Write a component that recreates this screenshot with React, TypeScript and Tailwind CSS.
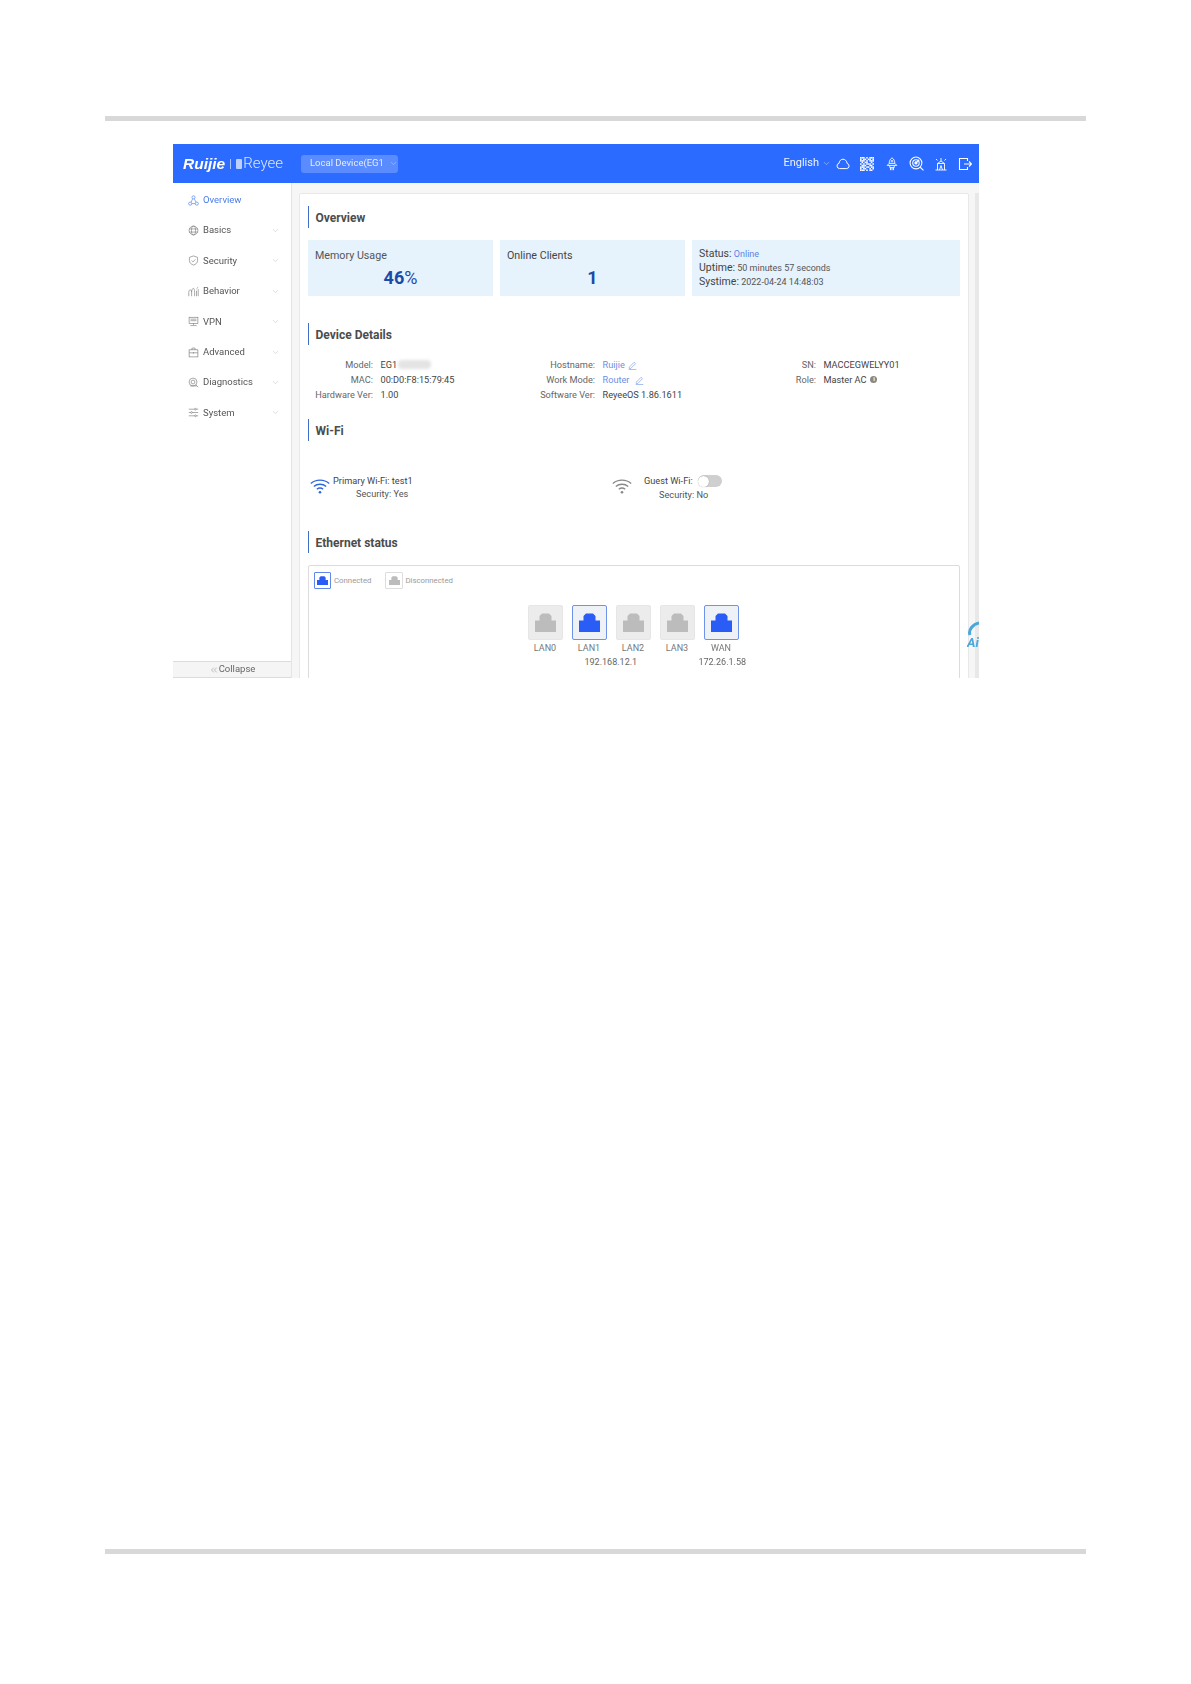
import { ChevronDown, ChevronsLeft } from 'lucide-react';
import type { ReactNode } from 'react';

const font = { fontFamily: 'Roboto, "Liberation Sans", sans-serif' };

function Ico({ size = 11, className = '', sw = 0.8, children }: { size?: number; className?: string; sw?: number; children: ReactNode }) {
  return (
    <svg width={size} height={size} viewBox="0 0 14 14" fill="none" stroke="currentColor" strokeWidth={sw} className={className}>
      {children}
    </svg>
  );
}

const navIcons: Record<string, ReactNode> = {
  Overview: (
    <>
      <circle cx="7" cy="3" r="2" />
      <circle cx="2.8" cy="11" r="2" />
      <circle cx="11.2" cy="11" r="2" />
      <path d="M6 4.8 3.8 9.2M8 4.8l2.2 4.4M4.8 11h4.4" />
    </>
  ),
  Basics: (
    <>
      <circle cx="7" cy="7" r="5.6" />
      <ellipse cx="7" cy="7" rx="2.6" ry="5.6" />
      <path d="M1.4 5h11.2M1.4 9h11.2" />
    </>
  ),
  Security: (
    <>
      <path d="M7 1.2 12.2 3v4c0 3-2.4 5-5.2 5.8C4.2 12 1.8 10 1.8 7V3Z" />
      <path d="m4.6 7 1.8 1.8 3-3.2" />
    </>
  ),
  Behavior: (
    <>
      <path d="M1 13V8c0-2 1-3 2-3s1.600 1 1.600 3v5M4.600 8c0-3 1.200-5 2.200-5s1.600 2 1.600 5v5M10.800 13V6M13 13V4M10.800 3.500 13 1.500" />
    </>
  ),
  VPN: (
    <>
      <rect x="1.4" y="1.6" width="11.2" height="7.8" />
      <path d="M3.2 4h7.6M3.2 6h7.6M7 9.4v2M3 12.2h8" />
    </>
  ),
  Advanced: (
    <>
      <rect x="1.4" y="3.6" width="11.2" height="9" />
      <path d="M5 3.6V1.4h4v2.2M1.4 7.4h11.2M7 6.4v2" />
    </>
  ),
  Diagnostics: (
    <>
      <circle cx="6.4" cy="6.4" r="5" />
      <circle cx="6.4" cy="6.4" r="2.4" />
      <path d="m10 10 3 3M3 11.4h8" />
    </>
  ),
  System: (
    <>
      <path d="M1 2.800h7.400M10.600 2.800H13M1 7h2.400M5.600 7H13M1 11.200h7.400M10.600 11.200H13" />
      <circle cx="9.500" cy="2.800" r="1.100" />
      <circle cx="4.500" cy="7" r="1.100" />
      <circle cx="9.500" cy="11.200" r="1.100" />
    </>
  ),
};

const navItems = ['Overview', 'Basics', 'Security', 'Behavior', 'VPN', 'Advanced', 'Diagnostics', 'System'];

const qrRows = ['111010111', '101101101', '111010111', '010110010', '101011101', '011100110', '111011011', '101100101', '111010110'];

function QrIcon() {
  return (
    <svg width="14" height="14" viewBox="0 0 9 9" fill="currentColor" className="ml-[10px]">
      {qrRows.map((row, y) =>
        row.split('').map((cell, x) => (cell === '1' ? <rect key={`${x}-${y}`} x={x} y={y} width="1" height="1" /> : null)),
      )}
    </svg>
  );
}

function HeaderIcons() {
  return (
    <div className="flex items-center text-white">
      <span className="text-[11px] text-[#eef3ff]">English</span>
      <ChevronDown size={9} strokeWidth={1.2} className="ml-[3px] text-[#dbe6ff]" />
      <Ico size={14} sw={1} className="ml-[5px]">
        <path d="M3.600 11.600h7a2.600 2.600 0 0 0 .6-5.100C10.800 3.800 9 2.200 7 2.200 5 2.200 3.400 3.800 3 6.300a2.700 2.700 0 0 0 .6 5.300Z" />
      </Ico>
      <QrIcon />
      <Ico size={14} sw={0.9} className="ml-[11px]">
        <path d="M7 .8C5 2.200 4.200 4 4.200 6.400h5.600C9.800 4 9 2.200 7 .8Z" />
        <circle cx="7" cy="4.200" r=".8" />
        <path d="M4.200 6.400 2.200 8.400h9.600l-2-2M4.800 8.400v2.200h4.400V8.400M5.500 10.600v2.600M7 10.600v2.600M8.500 10.600v2.600" />
      </Ico>
      <Ico size={15} sw={1} className="ml-[10px]">
        <circle cx="6.500" cy="6.500" r="5.500" />
        <circle cx="6.500" cy="6.500" r="3" />
        <circle cx="6.500" cy="6.500" r="1" fill="currentColor" />
        <path d="m10.500 10.500 3 3M6.500 6.500l3-3" />
      </Ico>
      <Ico size={14} sw={0.9} className="ml-[10px]">
        <path d="M1.500 13h11M3.500 13V6.500h7V13M3.500 6.500 7 4l3.500 2.500M7 1v3M5.500 13l1.500-4.500 1.500 4.500M2 2l1.500 1.500M12 2l-1.500 1.500" />
      </Ico>
      <Ico size={14} sw={1.1} className="ml-[10px]">
        <path d="M9.500 4V1.500h-8v11h8V10M6 7h7.500M11 4.500 13.500 7 11 9.500" />
      </Ico>
    </div>
  );
}

function SectionTitle({ children }: { children: ReactNode }) {
  return (
    <div className="flex h-[22px] items-center border-l-[1.5px] border-[#3f6fc6] pl-[6.500px] pt-[1px] text-[12px] font-bold text-[#4c4c4c]">
      {children}
    </div>
  );
}

function Edit() {
  return (
    <Ico size={9} sw={0.9} className="ml-[3px] inline-block text-[#6f8fe0]">
      <path d="M2 9.500 9.500 2l2.200 2.200L4.200 11.700H2ZM1 13.200h12" />
    </Ico>
  );
}

function DetailLabel({ children }: { children: ReactNode }) {
  return <div className="text-right text-[#666]">{children}</div>;
}

function WifiIcon({ className }: { className: string }) {
  return (
    <svg width="20" height="16" viewBox="0 0 20 16" fill="none" stroke="currentColor" className={className}>
      <path d="M.8 5.500C5.800 1 14.200 1 19.200 5.500" strokeWidth="1.300" />
      <path d="M3.800 8.500c3.400-3 9-3 12.400 0" strokeWidth="1.300" />
      <path d="M6.800 11.300c2-1.600 4.400-1.600 6.400 0" strokeWidth="1.300" />
      <circle cx="10" cy="14.200" r="1.300" fill="currentColor" stroke="none" />
    </svg>
  );
}

function PortGlyph({ width, className }: { width: number; className: string }) {
  return (
    <svg width={width} viewBox="0 0 21 19" fill="currentColor" className={className}>
      <path d="M0 19V7.500h4.500V3L7 .5h7L16.500 3v4.500H21V19Z" />
    </svg>
  );
}

function Port({ name, on, ip, ipClass = '' }: { name: string; on?: boolean; ip?: string; ipClass?: string }) {
  return (
    <div className="flex w-[35px] flex-col items-start">
      <div
        className={`flex h-[35px] w-[35px] items-center justify-center rounded-[2px] ${
          on ? 'border border-[#6f93e8] bg-[#eef1f6]' : 'border border-[#e6e6e6] bg-[#ececec]'
        }`}
      >
        <PortGlyph width={21} className={on ? 'text-[#2a5cf6]' : 'text-[#bcbcbc]'} />
      </div>
      <div className="mt-[2px] w-full text-center text-[9px] leading-[13px] text-[#777]">{name}</div>
      {ip && <div className={`whitespace-nowrap text-[9px] leading-[15px] text-[#666] ${ipClass}`}>{ip}</div>}
    </div>
  );
}

export default function App() {
  return (
    <div className="flex h-[1684px] w-[1191px] flex-col bg-white pt-[116px]" style={font}>
      <div className="mx-[105px] h-[5px] bg-[#d8d8d8]" />

      <div className="relative ml-[173px] mt-[23px] flex h-[534px] w-[806px] flex-col overflow-hidden blur-[0.35px]">
        {/* header */}
        <div className="flex h-[39px] shrink-0 items-center justify-between bg-[#2b6bff] pl-[10px] pr-[7px] shadow-[0_1px_2px_rgba(0,0,0,0.15)]">
          <div className="flex items-center">
            <span className="text-[15.500px] font-bold italic leading-none text-white" style={{ fontFamily: '"Liberation Sans", sans-serif' }}>
              Ruijie
            </span>
            <span className="mx-[5px] h-[10px] w-px bg-[#a9c2ff]" />
            <span className="h-[10px] w-[6px] rounded-[1px] bg-[#bcd0ff]" />
            <span className="ml-[1px] text-[15px] font-light leading-none text-[#dbe6ff]">Reyee</span>
            <div className="ml-[18px] flex h-[18px] w-[97px] items-center whitespace-nowrap rounded-[3px] bg-[#5a8bff] pl-[9px] text-[9.500px] text-[#e4ecff]">
              Local Device(EG1
              <ChevronDown size={9} strokeWidth={1.2} className="ml-[5px] text-[#cfdcff]" />
            </div>
          </div>
          <HeaderIcons />
        </div>

        <div className="flex min-h-0 flex-1">
          {/* sidebar */}
          <div className="flex w-[119px] shrink-0 flex-col border-r border-[#e4e4e4] bg-white">
            <div className="flex-1 pt-[2px]">
              {navItems.map((item, i) => (
                <div key={item} className={`flex h-[30.4px] items-center pl-[15px] pr-[11px] text-[9.5px] ${i === 0 ? 'text-[#4a7bea]' : 'text-[#555]'}`}>
                  <Ico size={11} className={i === 0 ? 'text-[#4a7bea]' : 'text-[#777]'}>
                    {navIcons[item]}
                  </Ico>
                  <span className="ml-[4px] flex-1">{item}</span>
                  {i > 0 && <ChevronDown size={9} strokeWidth={1} className="text-[#aaa]" />}
                </div>
              ))}
            </div>
            <div className="flex h-[17px] items-center justify-center border-y border-[#dcdcdc] bg-[#f5f5f5] text-[9.500px] text-[#666]">
              <ChevronsLeft size={10} strokeWidth={1} />
              Collapse
            </div>
          </div>

          {/* main */}
          <div className="flex min-w-0 flex-1 overflow-hidden bg-[#f6f6f6] pl-[7px] pt-[10px]">
            <div className="h-[600px] min-w-0 flex-1 rounded-[2px] border border-[#e8e8e8] bg-white pl-[8px] pr-[8px] pt-[12px] text-[9.2px] text-[#444]">
              <SectionTitle>Overview</SectionTitle>
              <div className="mt-[12px] flex h-[56px] gap-[7px]">
                <div className="w-[185px] bg-[#e6f2fc] px-[7px] pt-[7.500px]">
                  <div className="text-[10.7px] leading-[15px] text-[#555]">Memory Usage</div>
                  <div className="mt-[4px] text-center text-[18px] font-bold leading-[22px] text-[#1c4aa6]">
                    46<span className="font-normal">%</span>
                  </div>
                </div>
                <div className="w-[185px] bg-[#e6f2fc] px-[7px] pt-[7.500px]">
                  <div className="text-[10.7px] leading-[15px] text-[#444]">Online Clients</div>
                  <div className="mt-[4px] text-center text-[18px] font-bold leading-[22px] text-[#1c4aa6]">1</div>
                </div>
                <div className="flex-1 bg-[#e6f2fc] px-[7px] pt-[7px] text-[9px] leading-[13px] text-[#555]">
                  <div>
                    <span className="text-[10.5px] text-[#444]">Status:</span> <span className="text-[#5b85e6]">Online</span>
                  </div>
                  <div>
                    <span className="text-[10.5px] text-[#444]">Uptime:</span> 50 minutes 57 seconds
                  </div>
                  <div>
                    <span className="text-[10.5px] text-[#444]">Systime:</span> 2022-04-24 14:48:03
                  </div>
                </div>
              </div>

              <div className="mt-[27px]">
                <SectionTitle>Device Details</SectionTitle>
              </div>
              <div className="mt-[12px] grid auto-rows-[15px] grid-cols-[65px_133px_74px_132px_74px_1fr] items-center gap-x-[7.500px]">
                <DetailLabel>Model:</DetailLabel>
                <div className="flex items-center">
                  EG1
                  <span className="ml-[1px] h-[9px] w-[33px] rounded-[4px] bg-[#e4e4e4] blur-[1.500px]" />
                </div>
                <DetailLabel>Hostname:</DetailLabel>
                <div className="text-[#6b8fe6]">
                  Ruijie
                  <Edit />
                </div>
                <DetailLabel>SN:</DetailLabel>
                <div>MACCEGWELYY01</div>

                <DetailLabel>MAC:</DetailLabel>
                <div>00:D0:F8:15:79:45</div>
                <DetailLabel>Work Mode:</DetailLabel>
                <div className="text-[#6b8fe6]">
                  Router <Edit />
                </div>
                <DetailLabel>Role:</DetailLabel>
                <div className="flex items-center">
                  Master AC
                  <span className="ml-[4px] flex h-[7px] w-[7px] items-center justify-center rounded-full bg-[#888] text-[6px] font-bold leading-none text-white">i</span>
                </div>

                <DetailLabel>Hardware Ver:</DetailLabel>
                <div>1.00</div>
                <DetailLabel>Software Ver:</DetailLabel>
                <div>ReyeeOS 1.86.1611</div>
              </div>

              <div className="mt-[17px]">
                <SectionTitle>Wi-Fi</SectionTitle>
              </div>
              <div className="mt-[33px] flex h-[27px]">
                <div className="flex w-[304px] pl-[2px]">
                  <WifiIcon className="mt-[4px] text-[#2f66e0]" />
                  <div className="ml-[3px] pt-[1px] leading-[12.500px]">
                    <div>Primary Wi-Fi: test1</div>
                    <div className="pl-[23px] text-[#555]">Security: Yes</div>
                  </div>
                </div>
                <div className="flex">
                  <WifiIcon className="mt-[4px] text-[#888]" />
                  <div className="ml-[12px] pt-[1px]">
                    <div className="flex items-center leading-[12.500px]">
                      Guest Wi-Fi:
                      <span className="ml-[5px] flex h-[12px] w-[24px] items-center rounded-full bg-[#cfcfcf]">
                        <span className="h-[11px] w-[11px] rounded-full bg-white shadow-[0_0_1px_rgba(0,0,0,0.4)]" />
                      </span>
                    </div>
                    <div className="mt-[1px] pl-[15px] leading-[12.500px] text-[#555]">Security: No</div>
                  </div>
                </div>
              </div>

              <div className="mt-[30px]">
                <SectionTitle>Ethernet status</SectionTitle>
              </div>
              <div className="mt-[12px] h-[200px] rounded-[2px] border border-[#dcdcdc] pl-[5px] pr-[7px] pt-[6px]">
                <div className="flex items-center text-[7.800px] text-[#9a9a9a]">
                  <span className="flex h-[17px] w-[17px] items-center justify-center rounded-[1px] border border-[#5f88ea]">
                    <PortGlyph width={11} className="text-[#2a5cf6]" />
                  </span>
                  <span className="ml-[3px]">Connected</span>
                  <span className="ml-[14px] flex h-[17px] w-[18px] items-center justify-center rounded-[1px] border border-[#dedede]">
                    <PortGlyph width={11} className="text-[#bcbcbc]" />
                  </span>
                  <span className="ml-[2px]">Disconnected</span>
                </div>
                <div className="mt-[16px] flex justify-center gap-[9px]">
                  <Port name="LAN0" />
                  <Port name="LAN1" on ip="192.168.12.1" ipClass="ml-[13px]" />
                  <Port name="LAN2" />
                  <Port name="LAN3" />
                  <Port name="WAN" on ip="172.26.1.58" ipClass="-ml-[5px]" />
                </div>
              </div>
            </div>
            <div className="ml-[6px] w-[4px] shrink-0 self-stretch bg-[#e8e8e8]" />
          </div>
        </div>

        {/* floating assistant, clipped by the window edge */}
        <div className="absolute left-[794px] top-[477px] h-[32px] w-[12px] overflow-hidden text-[#4aa6dc]">
          <svg width="12" height="17" viewBox="0 0 12 17" fill="none" stroke="currentColor" strokeWidth="3">
            <path d="M3 14C1 9 6 3 12 2" />
          </svg>
          <span className="absolute left-0 top-[14px] text-[13px] font-bold italic leading-[16px]">Ai</span>
        </div>
      </div>

      <div className="mx-[105px] mb-[130px] mt-auto h-[5px] bg-[#d8d8d8]" />
    </div>
  );
}
